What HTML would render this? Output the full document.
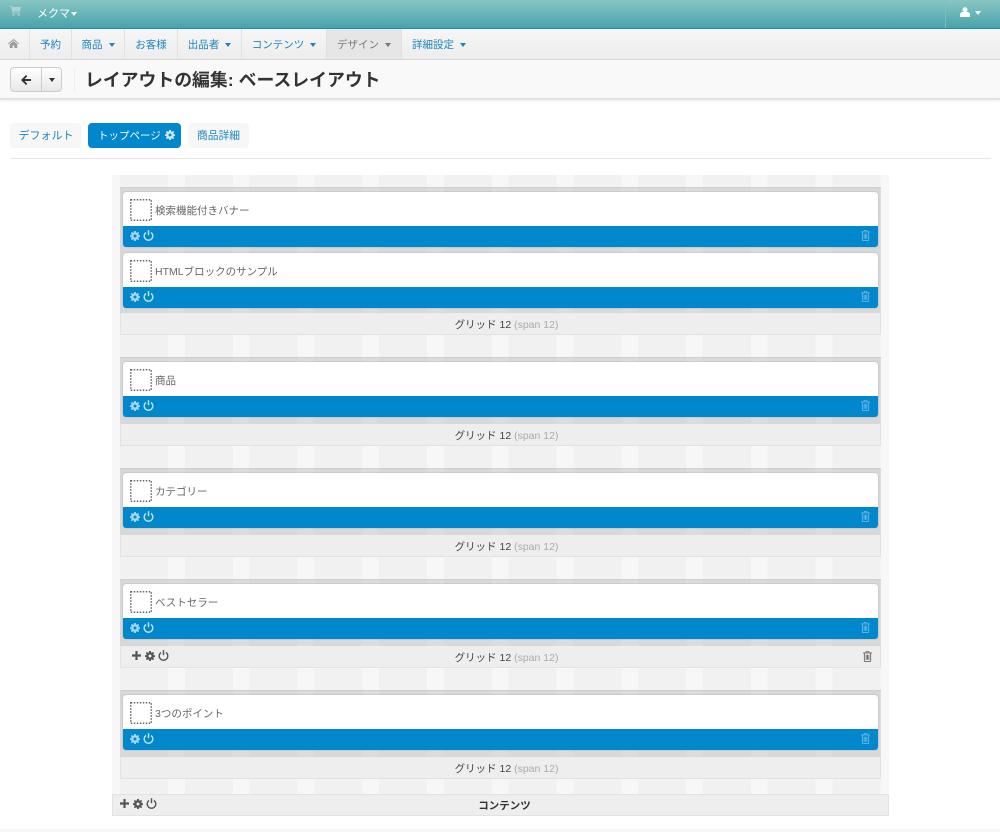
<!DOCTYPE html>
<html lang="ja"><head><meta charset="utf-8"><title>レイアウトの編集</title>
<style>
*{box-sizing:border-box}
html,body{margin:0;padding:0;background:#fff;width:1000px;height:832px;overflow:hidden}
body{font-family:"Liberation Sans","Noto Sans CJK JP",sans-serif;font-size:10.5px;color:#555;position:relative}
.a{position:absolute;white-space:nowrap}
#top{left:0;top:0;width:1000px;height:29px;background:linear-gradient(#88c6c3,#4aa2ac);border-bottom:1px solid #1f8fb0}
#nav{left:0;top:29px;width:1000px;height:31px;background:linear-gradient(#f6f6f6,#ededed);border-bottom:1px solid #d8d8d8}
.ni{position:absolute;top:0;height:30px;line-height:32px;color:#1a85c0;border-right:1px solid #e2e2e2;text-align:center}
.car{display:inline-block;width:0;height:0;border-left:3.5px solid transparent;border-right:3.5px solid transparent;border-top:4px solid currentColor;vertical-align:middle;margin-left:6px}
#bar{left:0;top:60px;width:1000px;height:40px;background:#f9f9f9;border-bottom:2px solid #e2e2e2;box-shadow:0 1px 2px rgba(0,0,0,.06)}
#btn{left:10px;top:67px;width:52px;height:25px;border:1px solid #ccc;border-radius:4px;background:linear-gradient(#fff,#e8e8e8)}
h1{position:absolute;left:85px;top:68px;margin:0;font-size:17.85px;line-height:25px;font-weight:bold;color:#333;white-space:nowrap}
.tab{position:absolute;top:123px;height:25px;line-height:27px;border-radius:4px;text-align:center;background:#f7f7f7;color:#1a85c0}
#wrap{left:112px;top:175px;width:777px;height:619px;background:repeating-linear-gradient(90deg,#f7f7f7 0,#f7f7f7 8px,#f1f1f1 8px,#f1f1f1 56px,#f7f7f7 56px,#f7f7f7 64.75px)}
.row{position:absolute;left:120px;width:761px;background:repeating-linear-gradient(90deg,#d8d8d8 0,#d8d8d8 48px,#dcdcdc 48px,#dcdcdc 64.75px);border-top:1px solid #cfcfcf}
.foot{position:absolute;left:120px;width:761px;height:22px;background:#eee;border:1px solid #e2e2e2;border-top:0;padding-left:12px;text-align:center;line-height:25px;font-size:10.5px;color:#444}
.foot span{color:#aaa}
.blk{position:absolute;left:123px;width:755px;height:55px;border-radius:3px;background:#fff;overflow:hidden;box-shadow:0 0 1px rgba(0,0,0,.4)}
.blk b{position:absolute;left:32px;top:0;height:34px;line-height:38px;font-weight:normal;font-size:10.5px;color:#666;white-space:nowrap}
.blk u{position:absolute;left:0;top:34px;width:755px;height:21px;background:#0087cc;display:block}
svg{position:absolute;display:block}
</style></head><body>
<svg width="0" height="0" style="position:absolute"><defs>
<symbol id="cog" viewBox="0 0 12 12"><path fill-rule="evenodd" d="M5 0h2l.3 1.600 1.100.5L9.800 1.200 11 2.500l-1 1.300.5 1.200L12 5.200v1.800l-1.500.3-.5 1.100 1 1.400L9.700 11l-1.300-1-1.100.4L7 12H5l-.3-1.600-1.100-.4-1.300 1L1 9.800l1-1.400-.5-1.100L0 7V5.200L1.500 5 2 3.800 1 2.500 2.200 1.200l1.400.9 1.100-.5zM6 4.200a1.800 1.800 0 100 3.600 1.800 1.800 0 000-3.600z"/></symbol>
<symbol id="pow" viewBox="0 0 12 12"><path fill="none" stroke="currentColor" stroke-width="1.500" d="M3.300 2.600a4.700 4.700 0 105.400 0"/><path fill="none" stroke="currentColor" stroke-width="1.600" d="M6 .2v5.400"/></symbol>
<symbol id="tr" viewBox="0 0 10 12"><path fill-rule="evenodd" d="M3.300 0h3.400l.7 1.500H10v1H9v8.300c0 .7-.5 1.200-1 1.200H2c-.5 0-1-.5-1-1.200V2.500H0v-1h2.600zM4 .9l-.3.6h2.600L6 .9zM2 2.500V11h6V2.500zM3 4h1v5.800H3zm1.500 0h1v5.800h-1zM6 4h1v5.800H6z"/></symbol>
<symbol id="pl" viewBox="0 0 10 10"><path d="M3.800 0h2.400v3.800H10v2.400H6.200V10H3.800V6.200H0V3.800h3.800z"/></symbol>
<symbol id="dot" viewBox="0 0 22 22"><rect x=".75" y=".75" width="20.500" height="20.500" fill="none" stroke="#666" stroke-width="1.500" stroke-dasharray="1.500 1.500"/></symbol>
</defs></svg>

<div class="a" id="top"></div>
<svg style="left:10px;top:6px" width="11" height="10" viewBox="0 0 11 10" fill="#a8d5d3"><path d="M0 0h2l.4 1H11l-1 4.500H3.300l.2 1H10v1H2.600L1.200 1H0z"/><circle cx="3.500" cy="9" r="1"/><circle cx="9" cy="9" r="1"/></svg>
<div class="a" style="left:37px;top:6px;font-size:11px;line-height:17px;color:#fff">メクマ<span class="car" style="margin-left:1px;border-top-color:#fff"></span></div>
<div class="a" style="left:945px;top:0;width:1px;height:28px;background:#7dbdbd"></div>
<svg style="left:960px;top:7px" width="10" height="10" viewBox="0 0 10 10" fill="#fff"><circle cx="5" cy="2.700" r="2.500"/><path d="M0 10V7.500C0 6 1.500 5 3 5h4c1.500 0 3 1 3 2.500V10z"/></svg>
<div class="a" style="left:975px;top:11px;width:0;height:0;border-left:3.500px solid transparent;border-right:3.500px solid transparent;border-top:4px solid #fff"></div>

<div class="a" id="nav">
<div class="ni" style="left:0;width:30px"></div>
<div class="ni" style="left:30px;width:42px">予約</div>
<div class="ni" style="left:72px;width:53px">商品<span class="car"></span></div>
<div class="ni" style="left:125px;width:53px">お客様</div>
<div class="ni" style="left:178px;width:64px">出品者<span class="car"></span></div>
<div class="ni" style="left:242px;width:85px">コンテンツ<span class="car"></span></div>
<div class="ni" style="left:327px;width:75px;background:#e6e6e6;color:#777">デザイン<span class="car"></span></div>
<div class="ni" style="left:402px;width:74px;border:0">詳細設定<span class="car"></span></div>
</div>
<svg style="left:8px;top:39px" width="11" height="9" viewBox="0 0 11 9" fill="#999"><path d="M5.500 0L11 4.500l-.6.700-4.900-4-4.900 4L0 4.500zM1.800 5.200l3.700-3 3.700 3V9H6.400V6.400H4.600V9H1.800z"/></svg>

<div class="a" id="bar"></div>
<div class="a" id="btn"></div>
<div class="a" style="left:41px;top:68px;width:1px;height:23px;background:#ccc"></div>
<svg style="left:21px;top:75px" width="10" height="10" viewBox="0 0 10 10" fill="#333"><path d="M5 0l1.300 1.300L3.600 4H10v2H3.600l2.700 2.700L5 10 0 5z"/></svg>
<div class="a" style="left:49px;top:78px;width:0;height:0;border-left:3.500px solid transparent;border-right:3.500px solid transparent;border-top:4px solid #333"></div>
<div class="a" style="left:74px;top:68px;width:1px;height:24px;background:#efefef"></div>
<h1>レイアウトの編集: ベースレイアウト</h1>

<div class="tab" style="left:10px;width:72px;font-size:11px">デフォルト</div>
<div class="tab" style="left:88px;width:93px;background:#0087cc;color:#fff;text-align:left;padding-left:10px">トップページ</div>
<svg style="left:165px;top:130px" width="10" height="10" fill="#d5e9f5"><use href="#cog"/></svg>
<div class="tab" style="left:188px;width:61px;font-size:10.75px">商品詳細</div>
<div class="a" style="left:10px;top:158px;width:981px;height:1px;background:#e5e5e5"></div>

<div class="a" id="wrap"></div>

<div class="row" style="top:187px;height:126px"></div>
<div class="foot" style="top:313px">グリッド 12 <span>(span 12)</span></div>
<div class="blk" style="top:192px"><b>検索機能付きバナー</b><u></u></div>
<div class="blk" style="top:253px"><b>HTMLブロックのサンプル</b><u></u></div>

<div class="row" style="top:357px;height:67px"></div>
<div class="foot" style="top:424px">グリッド 12 <span>(span 12)</span></div>
<div class="blk" style="top:362px"><b>商品</b><u></u></div>

<div class="row" style="top:468px;height:67px"></div>
<div class="foot" style="top:535px">グリッド 12 <span>(span 12)</span></div>
<div class="blk" style="top:473px"><b>カテゴリー</b><u></u></div>

<div class="row" style="top:579px;height:67px"></div>
<div class="foot" style="top:646px">グリッド 12 <span>(span 12)</span></div>
<div class="blk" style="top:584px"><b>ベストセラー</b><u></u></div>

<div class="row" style="top:690px;height:67px"></div>
<div class="foot" style="top:757px">グリッド 12 <span>(span 12)</span></div>
<div class="blk" style="top:695px"><b>3つのポイント</b><u></u></div>

<!-- dotted thumbnails -->
<svg style="left:130px;top:199px" width="22" height="22"><use href="#dot"/></svg>
<svg style="left:130px;top:260px" width="22" height="22"><use href="#dot"/></svg>
<svg style="left:130px;top:369px" width="22" height="22"><use href="#dot"/></svg>
<svg style="left:130px;top:480px" width="22" height="22"><use href="#dot"/></svg>
<svg style="left:130px;top:591px" width="22" height="22"><use href="#dot"/></svg>
<svg style="left:130px;top:702px" width="22" height="22"><use href="#dot"/></svg>

<!-- blue bar icons -->
<svg style="left:130px;top:231px" width="10" height="10" fill="#a8d6f0"><use href="#cog"/></svg><svg style="left:143px;top:230px;color:#c5e3f5" width="11" height="11"><use href="#pow"/></svg><svg style="left:861px;top:230px" width="9" height="11" fill="#6cb6e2"><use href="#tr"/></svg>
<svg style="left:130px;top:292px" width="10" height="10" fill="#a8d6f0"><use href="#cog"/></svg><svg style="left:143px;top:291px;color:#c5e3f5" width="11" height="11"><use href="#pow"/></svg><svg style="left:861px;top:291px" width="9" height="11" fill="#6cb6e2"><use href="#tr"/></svg>
<svg style="left:130px;top:401px" width="10" height="10" fill="#a8d6f0"><use href="#cog"/></svg><svg style="left:143px;top:400px;color:#c5e3f5" width="11" height="11"><use href="#pow"/></svg><svg style="left:861px;top:400px" width="9" height="11" fill="#6cb6e2"><use href="#tr"/></svg>
<svg style="left:130px;top:512px" width="10" height="10" fill="#a8d6f0"><use href="#cog"/></svg><svg style="left:143px;top:511px;color:#c5e3f5" width="11" height="11"><use href="#pow"/></svg><svg style="left:861px;top:511px" width="9" height="11" fill="#6cb6e2"><use href="#tr"/></svg>
<svg style="left:130px;top:623px" width="10" height="10" fill="#a8d6f0"><use href="#cog"/></svg><svg style="left:143px;top:622px;color:#c5e3f5" width="11" height="11"><use href="#pow"/></svg><svg style="left:861px;top:622px" width="9" height="11" fill="#6cb6e2"><use href="#tr"/></svg>
<svg style="left:130px;top:734px" width="10" height="10" fill="#a8d6f0"><use href="#cog"/></svg><svg style="left:143px;top:733px;color:#c5e3f5" width="11" height="11"><use href="#pow"/></svg><svg style="left:861px;top:733px" width="9" height="11" fill="#6cb6e2"><use href="#tr"/></svg>

<!-- row 4 hover icons -->
<svg style="left:132px;top:651px" width="9" height="9" fill="#555"><use href="#pl"/></svg><svg style="left:145px;top:651px" width="10" height="10" fill="#555"><use href="#cog"/></svg><svg style="left:158px;top:650px;color:#555" width="11" height="11"><use href="#pow"/></svg><svg style="left:863px;top:651px" width="9" height="11" fill="#666"><use href="#tr"/></svg>

<div class="a" style="left:112px;top:794px;width:777px;height:22px;background:#eee;border:1px solid #e2e2e2;padding-left:8px;text-align:center;line-height:23px;font-weight:bold;font-size:10.5px;color:#333">コンテンツ</div>
<svg style="left:120px;top:799px" width="9" height="9" fill="#555"><use href="#pl"/></svg><svg style="left:133px;top:799px" width="10" height="10" fill="#555"><use href="#cog"/></svg><svg style="left:146px;top:798px;color:#555" width="11" height="11"><use href="#pow"/></svg>
<div class="a" style="left:0;top:829px;width:1000px;height:3px;background:#f7f7f7"></div>
</body></html>
